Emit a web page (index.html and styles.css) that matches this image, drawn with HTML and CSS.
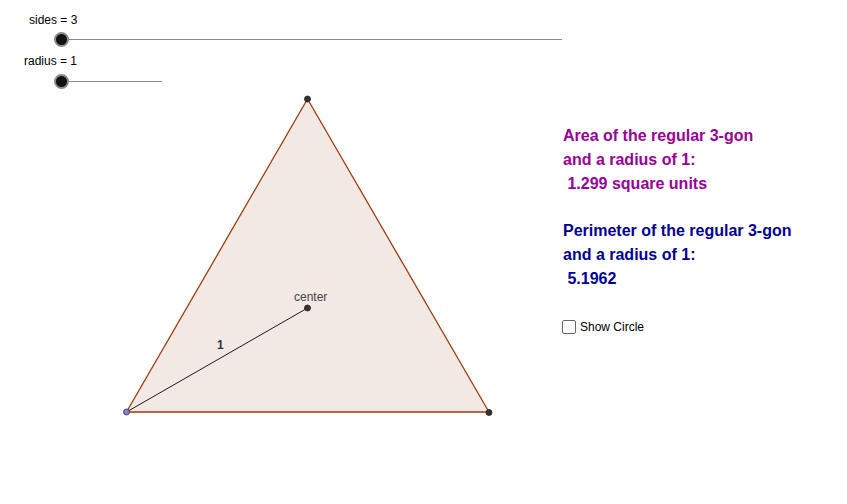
FILE: index.html
```html
<!DOCTYPE html>
<html>
<head>
<meta charset="utf-8">
<link rel="stylesheet" href="styles.css">
</head>
<body>
<div class="applet">
  <svg class="canvas" width="847" height="504" viewBox="0 0 847 504">
    <line x1="61" y1="39.5" x2="562" y2="39.5" class="track"/>
    <line x1="61" y1="81.5" x2="162" y2="81.5" class="track"/>
    <circle cx="61.5" cy="39.5" r="6.5" class="knob"/>
    <circle cx="61.5" cy="81.5" r="6.5" class="knob"/>
    <polygon points="307.5,99 126.5,412 489,412" class="poly"/>
    <line x1="126.5" y1="412" x2="307.5" y2="308" class="seg"/>
    <circle cx="307.5" cy="99" r="3" class="pt"/>
    <circle cx="489" cy="412.5" r="3" class="pt"/>
    <circle cx="307.5" cy="308" r="3" class="pt"/>
    <circle cx="126.5" cy="412" r="3" class="pt free"/>
    <text x="29" y="24" class="lbl">sides = 3</text>
    <text x="24" y="65" class="lbl">radius = 1</text>
    <text x="294" y="301" class="lbl gray">center</text>
    <text x="217" y="349" class="lbl gray one">1</text>
  </svg>
  <div class="info area">
    <div>Area of the regular 3-gon</div>
    <div>and a radius of 1:</div>
    <div>&nbsp;1.299 square units</div>
  </div>
  <div class="info perim">
    <div>Perimeter of the regular 3-gon</div>
    <div>and a radius of 1:</div>
    <div>&nbsp;5.1962</div>
  </div>
  <label class="check"><span class="box"></span><span>Show Circle</span></label>
</div>
</body>
</html>
```
FILE: styles.css
```css
html, body { margin: 0; padding: 0; background: #fff; }
.applet { position: relative; width: 847px; height: 504px; overflow: hidden; font-family: "Liberation Sans", Arial, sans-serif; }
.canvas { position: absolute; left: 0; top: 0; display: block; }
.track { stroke: #8c8c8c; stroke-width: 1; }
.knob { fill: #111; stroke: #8a8a8a; stroke-width: 2; }
.poly { fill: #f3e9e4; stroke: #a23a0a; stroke-width: 1.3; stroke-linejoin: round; }
.seg { stroke: #1a1a1a; stroke-width: 1; }
.pt { fill: #333; stroke: #222; stroke-width: 0.8; }
.pt.free { fill: #7f7fe6; stroke: #333; }
.lbl { font-family: "Liberation Sans", Arial, sans-serif; font-size: 12px; fill: #000; }
.lbl.gray { fill: #444; }
.lbl.one { font-weight: bold; fill: #333; }
.info { position: absolute; left: 563px; font-weight: bold; font-size: 16px; line-height: 24px; }
.area { top: 124px; color: #990099; }
.perim { top: 219px; color: #000099; }
.check { position: absolute; left: 562px; top: 320px; display: flex; align-items: center; gap: 4px; font-size: 12px; color: #000; }
.box { width: 12px; height: 12px; border: 1px solid #666; border-radius: 2px; background: #fff; }
```
